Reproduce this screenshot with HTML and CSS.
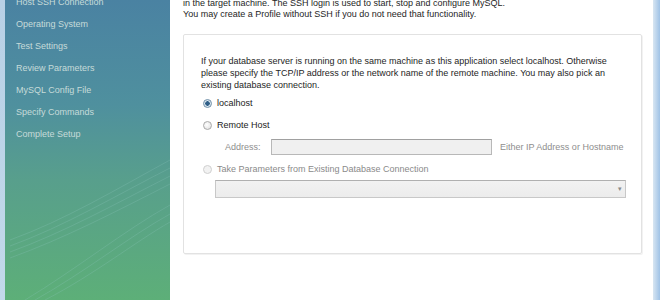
FILE: index.html
```html
<!DOCTYPE html>
<html>
<head>
<meta charset="utf-8">
<link rel="stylesheet" href="styles.css">
</head>
<body>
<div class="window">
  <div class="edge-left"></div>
  <aside class="sidebar">
    <svg class="waves" width="165" height="300" viewBox="0 0 165 300">
      <g fill="none" stroke="#8fc6c0" stroke-opacity="0.25" stroke-width="1">
        <path d="M5 240 C60 220 110 190 165 160"/>
        <path d="M5 246 C60 226 110 196 165 168"/>
        <path d="M5 252 C60 232 110 204 165 176"/>
        <path d="M5 258 C60 238 110 212 165 184"/>
        <path d="M20 300 C70 270 120 230 165 205"/>
        <path d="M30 300 C80 272 125 236 165 214"/>
        <path d="M40 300 C90 274 130 242 165 222"/>
      </g>
    </svg>
    <ul class="steps">
      <li>Host SSH Connection</li>
      <li>Operating System</li>
      <li>Test Settings</li>
      <li>Review Parameters</li>
      <li>MySQL Config File</li>
      <li>Specify Commands</li>
      <li>Complete Setup</li>
    </ul>
  </aside>
  <div class="gap"></div>
  <main class="content">
    <p class="intro">in the target machine. The SSH login is used to start, stop and configure MySQL.<br>You may create a Profile without SSH if you do not need that functionality.</p>
    <section class="panel">
      <p class="desc">If your database server is running on the same machine as this application select localhost. Otherwise please specify the TCP/IP address or the network name of the remote machine. You may also pick an existing database connection.</p>
      <div class="option"><span class="radio checked"></span><span>localhost</span></div>
      <div class="option"><span class="radio"></span><span>Remote Host</span></div>
      <div class="address-row">
        <span class="muted addr-label">Address:</span>
        <span class="field"></span>
        <span class="muted">Either IP Address or Hostname</span>
      </div>
      <div class="option disabled"><span class="radio"></span><span>Take Parameters from Existing Database Connection</span></div>
      <div class="combo"><span class="arrow">&#9662;</span></div>
    </section>
  </main>
  <div class="edge-right"></div>
</div>
</body>
</html>
```
FILE: styles.css
```css
html, body {
  margin: 0;
  padding: 0;
  background: #ffffff;
}
.window {
  display: flex;
  width: 660px;
  height: 300px;
  overflow: hidden;
  font-family: "Liberation Sans", Arial, sans-serif;
  font-size: 9px;
  color: #222222;
}
.edge-left {
  width: 5px;
  background: linear-gradient(#b8d0e6, #c2d9ea);
  flex: none;
}
.sidebar {
  position: relative;
  width: 165px;
  flex: none;
  background: linear-gradient(180deg, #4a82a2 0%, #4f909e 35%, #589f8c 60%, #5daf78 100%);
  overflow: hidden;
}
.waves {
  position: absolute;
  left: 0;
  top: 0;
}
.steps {
  position: relative;
  list-style: none;
  margin: -4px 0 0 0;
  padding: 0 0 0 11px;
}
.steps li {
  height: 22px;
  line-height: 13px;
  color: #c6dbd9;
  font-size: 9px;
}
.gap {
  width: 13px;
  flex: none;
  background: #ffffff;
}
.content {
  flex: 1;
  display: flex;
  flex-direction: column;
}
.intro {
  margin: -2px 0 0 0;
  line-height: 11px;
  color: #1e1e1e;
}
.panel {
  margin-top: 14px;
  width: 459px;
  height: 220px;
  border: 1px solid #e2e2e2;
  border-radius: 2px;
  box-shadow: 1px 1px 0 #f2f2f2;
  padding: 20px 12px 0 17px;
  box-sizing: border-box;
}
.desc {
  margin: 0 0 1px 0;
  line-height: 12px;
  color: #1e1e1e;
}
.option {
  display: flex;
  align-items: center;
  height: 22px;
  gap: 5px;
  padding-left: 2px;
}
.option.disabled {
  color: #8a8a8a;
}
.radio {
  width: 9px;
  height: 9px;
  border-radius: 50%;
  border: 1px solid #a9a9a9;
  background: radial-gradient(circle at 40% 40%, #ffffff, #dcdcdc);
  box-sizing: border-box;
  flex: none;
}
.option.disabled .radio {
  border-color: #d0d0d0;
  background: #f2f2f2;
}
.radio.checked {
  border-color: #6f8fa8;
  background: radial-gradient(circle, #2f5f88 0 2px, #d7e4ee 2.5px);
}
.address-row {
  display: flex;
  align-items: center;
  height: 22px;
  padding-left: 24px;
}
.muted {
  color: #8e8e8e;
}
.addr-label {
  width: 46px;
}
.field {
  width: 221px;
  height: 16px;
  border: 1px solid #b8b8b8;
  border-top-color: #a0a0a0;
  background: #f0f0f0;
  box-sizing: border-box;
  margin-right: 8px;
}
.combo {
  margin: 0 0 0 14px;
  width: 411px;
  height: 18px;
  border: 1px solid #c8c8c8;
  border-top-color: #b0b0b0;
  background: linear-gradient(#f2f2f2, #ececec);
  box-sizing: border-box;
  display: flex;
  justify-content: flex-end;
  align-items: center;
}
.arrow {
  font-size: 7px;
  color: #8a8a8a;
  padding-right: 3px;
}
.edge-right {
  width: 7px;
  flex: none;
  background: linear-gradient(90deg, #d8e6f2, #9fc2e6);
}
```
